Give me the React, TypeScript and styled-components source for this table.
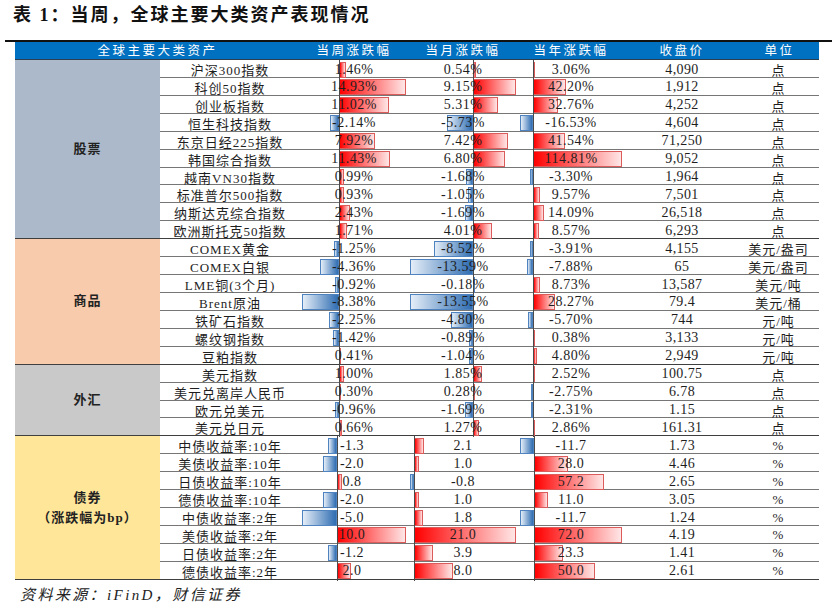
import React from "react";
import styled, { createGlobalStyle } from "styled-components";

const GlobalStyle = createGlobalStyle`
  html, body { margin: 0; padding: 0; background: #ffffff; }
  body {
    font-family: "Liberation Serif", "Noto Sans CJK SC", serif;
    color: #1c1c1c;
  }
`;

const ROW_H = 17.93;
const WIDTHS = [145, 140, 108, 110, 106, 116, 79];
const COLS = WIDTHS.map((w) => `${w}px`).join(" ");

type RowData = {
  name: string;
  w: number;
  m: number;
  y: number;
  close: string;
  unit: string;
};

type SectionData = {
  label: string;
  sub?: string;
  bg: string;
  rows: RowData[];
  bond?: boolean;
};

const stocks: RowData[] = [
  { name: "沪深300指数", w: 1.46, m: 0.54, y: 3.06, close: "4,090", unit: "点" },
  { name: "科创50指数", w: 14.93, m: 9.15, y: 42.2, close: "1,912", unit: "点" },
  { name: "创业板指数", w: 11.02, m: 5.31, y: 32.76, close: "4,252", unit: "点" },
  { name: "恒生科技指数", w: -2.14, m: -5.73, y: -16.53, close: "4,604", unit: "点" },
  { name: "东京日经225指数", w: 7.92, m: 7.42, y: 41.54, close: "71,250", unit: "点" },
  { name: "韩国综合指数", w: 11.43, m: 6.8, y: 114.81, close: "9,052", unit: "点" },
  { name: "越南VN30指数", w: 0.99, m: -1.68, y: -3.3, close: "1,964", unit: "点" },
  { name: "标准普尔500指数", w: 0.93, m: -1.05, y: 9.57, close: "7,501", unit: "点" },
  { name: "纳斯达克综合指数", w: 2.43, m: -1.69, y: 14.09, close: "26,518", unit: "点" },
  { name: "欧洲斯托克50指数", w: 1.71, m: 4.01, y: 8.57, close: "6,293", unit: "点" },
];

const goods: RowData[] = [
  { name: "COMEX黄金", w: -1.25, m: -8.52, y: -3.91, close: "4,155", unit: "美元/盎司" },
  { name: "COMEX白银", w: -4.36, m: -13.59, y: -7.88, close: "65", unit: "美元/盎司" },
  { name: "LME铜(3个月)", w: -0.92, m: -0.18, y: 8.73, close: "13,587", unit: "美元/吨" },
  { name: "Brent原油", w: -8.38, m: -13.55, y: 28.27, close: "79.4", unit: "美元/桶" },
  { name: "铁矿石指数", w: -2.25, m: -4.8, y: -5.7, close: "744", unit: "元/吨" },
  { name: "螺纹钢指数", w: -1.42, m: -0.89, y: 0.38, close: "3,133", unit: "元/吨" },
  { name: "豆粕指数", w: 0.41, m: -1.04, y: 4.8, close: "2,949", unit: "元/吨" },
];

const fx: RowData[] = [
  { name: "美元指数", w: 1.0, m: 1.85, y: 2.52, close: "100.75", unit: "点" },
  { name: "美元兑离岸人民币", w: 0.3, m: 0.28, y: -2.75, close: "6.78", unit: "点" },
  { name: "欧元兑美元", w: -0.96, m: -1.69, y: -2.31, close: "1.15", unit: "点" },
  { name: "美元兑日元", w: 0.66, m: 1.27, y: 2.86, close: "161.31", unit: "点" },
];

const bonds: RowData[] = [
  { name: "中债收益率:10年", w: -1.3, m: 2.1, y: -11.7, close: "1.73", unit: "%" },
  { name: "美债收益率:10年", w: -2.0, m: 1.0, y: 28.0, close: "4.46", unit: "%" },
  { name: "日债收益率:10年", w: 0.8, m: -0.8, y: 57.2, close: "2.65", unit: "%" },
  { name: "德债收益率:10年", w: -2.0, m: 1.0, y: 11.0, close: "3.05", unit: "%" },
  { name: "中债收益率:2年", w: -5.0, m: 1.8, y: -11.7, close: "1.24", unit: "%" },
  { name: "美债收益率:2年", w: 10.0, m: 21.0, y: 72.0, close: "4.19", unit: "%" },
  { name: "日债收益率:2年", w: -1.2, m: 3.9, y: 23.3, close: "1.41", unit: "%" },
  { name: "德债收益率:2年", w: 2.0, m: 8.0, y: 50.0, close: "2.61", unit: "%" },
];

const sections: SectionData[] = [
  { label: "股票", bg: "#acb9ca", rows: stocks },
  { label: "商品", bg: "#f8cbad", rows: goods },
  { label: "外汇", bg: "#c9c9c9", rows: fx },
  { label: "债券", sub: "（涨跌幅为bp）", bg: "#ffe699", rows: bonds, bond: true },
];

type Range = { min: number; max: number };
const rangeOf = (vals: number[]): Range => ({
  min: Math.min(0, ...vals),
  max: Math.max(0, ...vals),
});

const pctRows = [...stocks, ...goods, ...fx];
const pctRanges = {
  w: rangeOf(pctRows.map((r) => r.w)),
  m: rangeOf(pctRows.map((r) => r.m)),
  y: rangeOf(pctRows.map((r) => r.y)),
};
const bondRanges = {
  w: rangeOf(bonds.map((r) => r.w)),
  m: rangeOf(bonds.map((r) => r.m)),
  y: rangeOf(bonds.map((r) => r.y)),
};

/* ---------- styled parts ---------- */

const Page = styled.div`
  width: 837px;
  height: 608px;
  overflow: hidden;
  background: #ffffff;
`;

const Title = styled.h1`
  margin: 0;
  height: 40px;
  box-sizing: border-box;
  padding: 4px 0 0 13px;
  font-family: "Liberation Serif", "Noto Sans CJK SC", serif;
  font-size: 18px;
  line-height: 22px;
  font-weight: 700;
  letter-spacing: 2px;
  color: #111111;
`;

const TopRule = styled.div`
  margin-left: 5px;
  width: 827px;
  height: 2px;
  background: #111111;
`;

const Table = styled.div`
  margin-left: 15px;
  width: 804px;
  display: flex;
  flex-direction: column;
`;

const HeaderRow = styled.div`
  display: grid;
  grid-template-columns: ${COLS};
  height: 18px;
  background: #0070c0;
  border-bottom: 1px solid #2d3e50;
  box-sizing: border-box;
`;

const HeaderCell = styled.div<{ $span?: number }>`
  grid-column: span ${(p) => p.$span ?? 1};
  display: flex;
  align-items: center;
  justify-content: center;
  color: #ffffff;
  font-family: "Noto Sans CJK SC", sans-serif;
  font-size: 12.5px;
  letter-spacing: 2.5px;
  line-height: 1;
`;

const Section = styled.div`
  display: flex;
  border-bottom: 1px solid #3f3f3f;
`;

const Category = styled.div<{ $bg: string }>`
  width: ${WIDTHS[0]}px;
  flex: none;
  background: ${(p) => p.$bg};
  display: flex;
  flex-direction: column;
  align-items: center;
  justify-content: center;
  font-family: "Liberation Serif", "Noto Sans CJK SC", serif;
  font-weight: 700;
  font-size: 13px;
  line-height: 20px;
  letter-spacing: 1px;
  color: #222222;
`;

const Rows = styled.div`
  flex: 1;
  display: flex;
  flex-direction: column;
`;

const Row = styled.div`
  display: grid;
  grid-template-columns: ${WIDTHS.slice(1).map((w) => `${w}px`).join(" ")};
  height: ${ROW_H}px;
  box-sizing: border-box;
  border-bottom: 1px solid #767676;
  background: #ffffff;

  &:last-child {
    border-bottom: none;
    height: ${ROW_H - 1}px;
  }
`;

const NameCell = styled.div`
  display: flex;
  align-items: center;
  justify-content: center;
  font-family: "Liberation Serif", "Noto Sans CJK SC", serif;
  font-size: 13px;
  letter-spacing: 1px;
  white-space: nowrap;
  color: #1e1e1e;
`;

const TextCell = styled.div`
  display: flex;
  align-items: center;
  justify-content: center;
  font-family: "Liberation Serif", "Noto Sans CJK SC", serif;
  font-size: 14px;
  letter-spacing: 0.4px;
  white-space: nowrap;
  color: #1e1e1e;
`;

const UnitCell = styled(NameCell)`
  font-size: 13px;
  padding-right: 2px;
`;

const BarCell = styled.div<{ $shift?: number }>`
  position: relative;
  display: flex;
  align-items: center;
  justify-content: center;
  padding-right: ${(p) => p.$shift ?? 0}px;
  overflow: hidden;
`;

const Bar = styled.div<{ $neg: boolean }>`
  position: absolute;
  top: 1.5px;
  bottom: 1.5px;
  box-sizing: border-box;
  border: 1px solid ${(p) => (p.$neg ? "#4f83bf" : "#dc5b5b")};
  background: ${(p) =>
    p.$neg
      ? "linear-gradient(to left, #2f6db2, #e4edf7)"
      : "linear-gradient(to right, #ff0000, #ffe6e6)"};
`;

const Axis = styled.div`
  position: absolute;
  top: 0;
  bottom: 0;
  width: 1px;
  background: #4a4a4a;
`;

const Value = styled.span`
  position: relative;
  z-index: 1;
  font-family: "Liberation Serif", serif;
  font-size: 14px;
  letter-spacing: 0.5px;
  color: #1e1e1e;
`;

const Source = styled.div`
  padding: 5px 0 0 20px;
  font-family: "Liberation Serif", "Noto Sans CJK SC", serif;
  font-style: italic;
  font-size: 15px;
  line-height: 20px;
  letter-spacing: 2.4px;
  color: #222222;
`;

/* ---------- components ---------- */

function DataBar({
  value,
  range,
  width,
  text,
  shift,
}: {
  value: number;
  range: Range;
  width: number;
  text: string;
  shift?: number;
}) {
  const margin = 2;
  const usable = width - margin * 2;
  const scale = usable / (range.max - range.min);
  const axis = margin + -range.min * scale;
  const len = Math.abs(value) * scale;
  const left = value >= 0 ? axis : axis - len;
  return (
    <BarCell $shift={shift}>
      {len > 0.2 && (
        <Bar $neg={value < 0} style={{ left: `${left}px`, width: `${Math.max(len, 2)}px` }} />
      )}
      <Axis style={{ left: `${axis}px` }} />
      <Value>{text}</Value>
    </BarCell>
  );
}

function SectionBlock({ s }: { s: SectionData }) {
  const ranges = s.bond ? bondRanges : pctRanges;
  const fmt = (v: number) => (s.bond ? v.toFixed(1) : `${v.toFixed(2)}%`);
  return (
    <Section>
      <Category $bg={s.bg}>
        <span>{s.label}</span>
        {s.sub && <span>{s.sub}</span>}
      </Category>
      <Rows>
        {s.rows.map((r) => (
          <Row key={r.name}>
            <NameCell>{r.name}</NameCell>
            <DataBar value={r.w} range={ranges.w} width={WIDTHS[2]} text={fmt(r.w)} shift={s.bond ? 4 : 0} />
            <DataBar value={r.m} range={ranges.m} width={WIDTHS[3]} text={fmt(r.m)} />
            <DataBar value={r.y} range={ranges.y} width={WIDTHS[4]} text={fmt(r.y)} />
            <TextCell>{r.close}</TextCell>
            <UnitCell>{r.unit}</UnitCell>
          </Row>
        ))}
      </Rows>
    </Section>
  );
}

export default function App() {
  return (
    <Page>
      <GlobalStyle />
      <Title>表 1：当周，全球主要大类资产表现情况</Title>
      <TopRule />
      <Table>
        <HeaderRow>
          <HeaderCell $span={2}>全球主要大类资产</HeaderCell>
          <HeaderCell>当周涨跌幅</HeaderCell>
          <HeaderCell>当月涨跌幅</HeaderCell>
          <HeaderCell>当年涨跌幅</HeaderCell>
          <HeaderCell>收盘价</HeaderCell>
          <HeaderCell>单位</HeaderCell>
        </HeaderRow>
        {sections.map((s) => (
          <SectionBlock key={s.label} s={s} />
        ))}
      </Table>
      <Source>资料来源：iFinD，财信证券</Source>
    </Page>
  );
}
